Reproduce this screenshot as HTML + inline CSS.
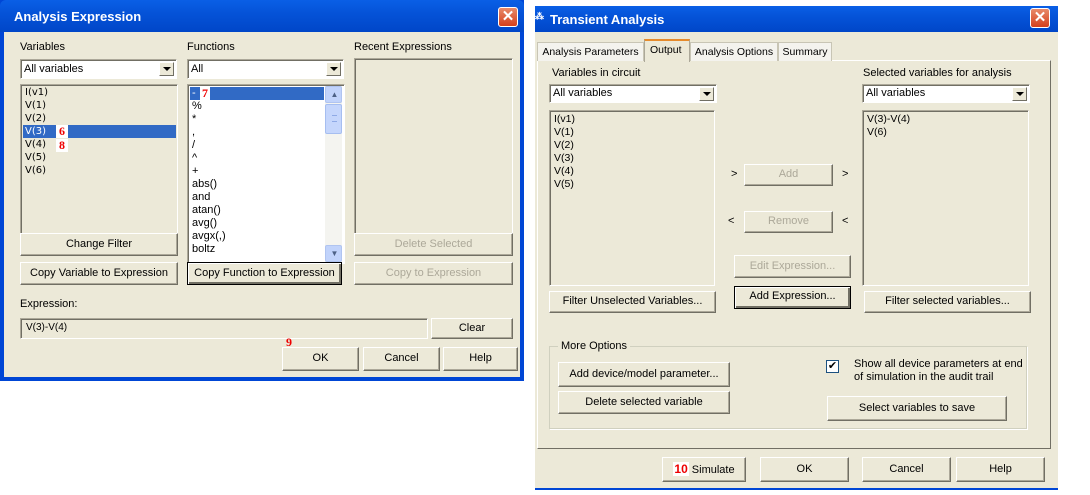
<!DOCTYPE html>
<html><head><style>
*{box-sizing:border-box;margin:0;padding:0}
body{width:1090px;height:495px;background:#fff;position:relative;overflow:hidden;font-family:"Liberation Sans",sans-serif;font-size:11px;color:#000}
.a{position:absolute}
.dlg{background:#ECE9D8}
.title{background:linear-gradient(#0a5fe6,#0553d8 40%,#0046c8);color:#fff;font-weight:bold;font-size:13px}
.close{background:linear-gradient(#e88a6a,#d5401c);border:1px solid #fff;border-radius:3px;color:#fff;font-size:15px;font-weight:bold;text-align:center;line-height:18px}
.btn{position:absolute;background:#ECE9D8;border:1px solid;border-color:#fff #716f64 #716f64 #fff;box-shadow:inset -1px -1px 0 #aca899;text-align:center;font-size:11px}
.dis{color:#aca899}
.foc{border:1px solid #000;box-shadow:inset 1px 1px 0 #fff,inset -2px -2px 0 #716f64}
.sunk{position:absolute;border:1px solid;border-color:#aca899 #fff #fff #aca899;box-shadow:inset 1px 1px 0 #716f64}
.white{background:#fff}
.combo{position:absolute;background:#fff;border:1px solid;border-color:#aca899 #fff #fff #aca899;box-shadow:inset 1px 1px 0 #716f64;padding:3px 0 0 3px}
.arr{position:absolute;right:2px;top:2px;width:15px;height:14px;background:#ECE9D8;border:1px solid;border-color:#fff #716f64 #716f64 #fff}
.arr:after{content:"";position:absolute;left:3px;top:4px;border:4px solid transparent;border-top:4px solid #000;border-bottom:0}
.list div{height:13px;line-height:13px;padding-left:2px}
.red{color:#e00;font-weight:bold;background:#fff;font-family:"Liberation Serif",serif;font-size:12px}
.tab{position:absolute;top:42px;height:19px;border:1px solid #c8c5b5;border-bottom:0;background:#f4f3ee;padding:3px 0 0 0;text-align:center;font-size:10.5px;white-space:nowrap;overflow:hidden}
</style></head><body>
<!-- LEFT DIALOG -->
<div class="a" style="left:0;top:0;width:524px;height:381px;background:#0046d5"></div>
<div class="a title" style="left:0;top:0;width:524px;height:32px;border-radius:6px 6px 0 0;padding:9px 0 0 14px">Analysis Expression</div>
<div class="a close" style="left:498px;top:7px;width:20px;height:20px">✕</div>
<div class="a dlg" style="left:4px;top:32px;width:516px;height:345px"></div>
<div class="a" style="left:20px;top:41px">Variables</div>
<div class="a" style="left:187px;top:41px">Functions</div>
<div class="a" style="left:354px;top:41px">Recent Expressions</div>
<div class="combo" style="left:20px;top:59px;width:157px;height:20px">All variables<div class="arr"></div></div>
<div class="combo" style="left:187px;top:59px;width:157px;height:20px">All<div class="arr"></div></div>
<div class="sunk" style="left:354px;top:58px;width:159px;height:177px"></div>
<div class="sunk list" style="left:20px;top:84px;width:158px;height:151px;padding:1px 1px 0 2px;font-family:'DejaVu Sans',sans-serif;font-size:10px">
<div>I(v1)</div><div>V(1)</div><div>V(2)</div><div style="background:#316AC5;color:#fff;position:relative">V(3)<span class="red a" style="left:33px;top:0;height:13px;padding:0 3px">6</span></div><div style="position:relative">V(4)<span class="red a" style="left:33px;top:1px;padding:0 3px">8</span></div><div>V(5)</div><div>V(6)</div></div>
<div class="sunk white list" style="left:187px;top:84px;width:158px;height:180px;padding:2px 0 0 2px">
<div style="background:#316AC5;color:#fff;width:134px;position:relative">-<span class="red a" style="left:10px;top:0;height:13px;padding:0 2px">7</span></div>
<div>%</div><div>*</div><div>,</div><div>/</div><div>^</div><div>+</div><div>abs()</div><div>and</div><div>atan()</div><div>avg()</div><div>avgx(,)</div><div>boltz</div>
<div class="a" style="right:2px;top:1px;width:17px;height:176px;background:#f4f4f0">
<div class="a" style="left:0;top:0;width:17px;height:17px;background:#c1d3fb;border:1px solid #b0c4f0;border-radius:2px;font-size:8px;text-align:center;line-height:15px;color:#4d6185">▲</div>
<div class="a" style="left:0;top:18px;width:17px;height:30px;background:#c5d6fc;border:1px solid #a6bef0;border-radius:2px"><div style="margin:10px 4px;height:7px;border-top:1px solid #8faae6;border-bottom:1px solid #8faae6"></div></div>
<div class="a" style="left:0;bottom:0;width:17px;height:17px;background:#c1d3fb;border:1px solid #b0c4f0;border-radius:2px;font-size:8px;text-align:center;line-height:15px;color:#4d6185">▼</div></div>
</div>
<div class="btn" style="left:20px;top:233px;width:158px;height:23px;line-height:20px">Change Filter</div>
<div class="btn dis" style="left:354px;top:233px;width:159px;height:23px;line-height:20px">Delete Selected</div>
<div class="btn" style="left:20px;top:262px;width:158px;height:23px;line-height:20px">Copy Variable to Expression</div>
<div class="btn foc" style="left:187px;top:262px;width:155px;height:23px;line-height:20px">Copy Function to Expression</div>
<div class="btn dis" style="left:354px;top:262px;width:159px;height:23px;line-height:20px">Copy to Expression</div>
<div class="a" style="left:20px;top:298px">Expression:</div>
<div class="sunk" style="left:20px;top:318px;width:408px;height:21px;padding:3px 0 0 5px;font-size:10px">V(3)-V(4)</div>
<div class="btn" style="left:431px;top:318px;width:82px;height:21px;line-height:18px">Clear</div>
<div class="a red" style="left:286px;top:335px;background:none">9</div>
<div class="btn" style="left:282px;top:347px;width:77px;height:24px;line-height:21px">OK</div>
<div class="btn" style="left:363px;top:347px;width:77px;height:24px;line-height:21px">Cancel</div>
<div class="btn" style="left:443px;top:347px;width:75px;height:24px;line-height:21px">Help</div>

<!-- RIGHT DIALOG -->
<div class="a title" style="left:535px;top:6px;width:523px;height:26px;padding:6px 0 0 15px"><span style="font-size:9px;position:absolute;left:0;top:5px">⁂</span>Transient Analysis</div>
<div class="a close" style="left:1030px;top:8px;width:20px;height:20px">✕</div>
<div class="a dlg" style="left:535px;top:32px;width:523px;height:456px"></div>
<div class="a" style="left:535px;top:488px;width:523px;height:2px;background:#0046d5"></div>
<div class="a" style="left:537px;top:60px;width:514px;height:389px;border:1px solid;border-color:#fff #716f64 #716f64 #fff"></div>
<div class="tab" style="left:537px;width:107px">Analysis Parameters</div>
<div class="a" style="left:644px;top:39px;width:46px;height:23px;border:1px solid #aca899;border-bottom:0;background:#ECE9D8;border-top:2px solid #e68b2c;padding:3px 0 0 5px;font-size:10.5px">Output</div>
<div class="tab" style="left:690px;width:88px">Analysis Options</div>
<div class="tab" style="left:778px;width:54px">Summary</div>
<div class="a" style="left:552px;top:67px">Variables in circuit</div>
<div class="a" style="left:863px;top:67px">Selected variables for analysis</div>
<div class="combo" style="left:549px;top:84px;width:168px;height:19px;padding-top:2px">All variables<div class="arr"></div></div>
<div class="combo" style="left:862px;top:84px;width:168px;height:19px;padding-top:2px">All variables<div class="arr"></div></div>
<div class="sunk list" style="left:549px;top:110px;width:166px;height:176px;padding:2px 0 0 2px;font-size:10.5px">
<div>I(v1)</div><div>V(1)</div><div>V(2)</div><div>V(3)</div><div>V(4)</div><div>V(5)</div></div>
<div class="sunk list" style="left:862px;top:110px;width:167px;height:176px;padding:2px 0 0 2px;font-size:10.5px">
<div>V(3)-V(4)</div><div>V(6)</div></div>
<div class="a" style="left:731px;top:168px">&gt;</div><div class="a" style="left:842px;top:168px">&gt;</div>
<div class="btn dis" style="left:744px;top:164px;width:89px;height:22px;line-height:19px">Add</div>
<div class="a" style="left:728px;top:215px">&lt;</div><div class="a" style="left:842px;top:215px">&lt;</div>
<div class="btn dis" style="left:744px;top:211px;width:89px;height:22px;line-height:19px">Remove</div>
<div class="btn dis" style="left:734px;top:255px;width:117px;height:23px;line-height:20px">Edit Expression...</div>
<div class="btn foc" style="left:734px;top:286px;width:117px;height:23px;line-height:19px">Add Expression...</div>
<div class="btn" style="left:549px;top:291px;width:167px;height:22px;line-height:19px">Filter Unselected Variables...</div>
<div class="btn" style="left:864px;top:291px;width:167px;height:22px;line-height:19px">Filter selected variables...</div>
<div class="a" style="left:549px;top:346px;width:478px;height:83px;border:1px solid #d0d0bf;box-shadow:1px 1px 0 #fff"></div>
<div class="a dlg" style="left:558px;top:340px;padding:0 3px">More Options</div>
<div class="btn" style="left:558px;top:362px;width:172px;height:25px;line-height:22px">Add device/model parameter...</div>
<div class="btn" style="left:558px;top:391px;width:172px;height:23px;line-height:20px">Delete selected variable</div>
<div class="a" style="left:826px;top:360px;width:13px;height:13px;background:#fff;border:1px solid #1c5180;font-size:11px;line-height:11px;text-align:center">✔</div>
<div class="a" style="left:854px;top:358px;line-height:13px">Show all device parameters at end<br>of simulation in the audit trail</div>
<div class="btn" style="left:827px;top:396px;width:180px;height:25px;line-height:22px">Select variables to save</div>
<div class="btn" style="left:662px;top:457px;width:84px;height:25px;line-height:22px"><span class="red" style="font-family:'Liberation Sans';padding:0 1px">10</span> Simulate</div>
<div class="btn" style="left:760px;top:457px;width:89px;height:25px;line-height:22px">OK</div>
<div class="btn" style="left:862px;top:457px;width:89px;height:25px;line-height:22px">Cancel</div>
<div class="btn" style="left:956px;top:457px;width:89px;height:25px;line-height:22px">Help</div>
</body></html>
